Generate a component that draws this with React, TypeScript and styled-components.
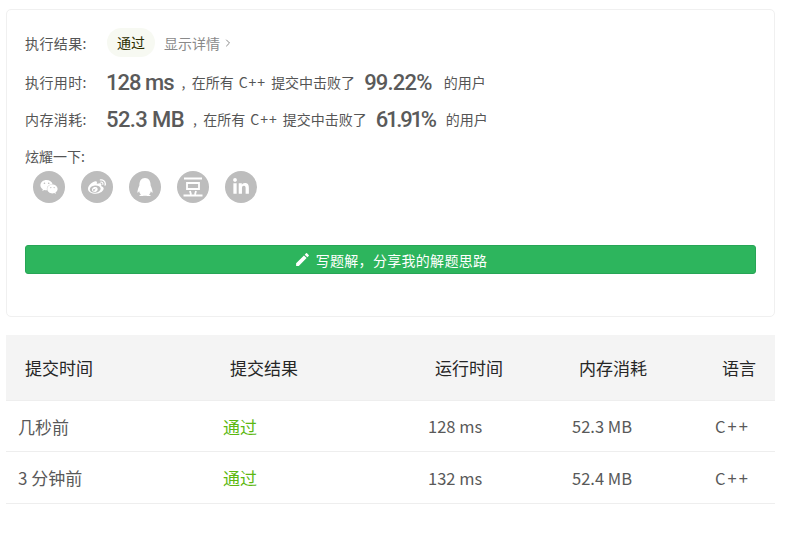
import React from "react";
import styled, { createGlobalStyle } from "styled-components";
import { FaLinkedinIn, FaQq, FaWeibo, FaWeixin } from "react-icons/fa";
import { MdEdit } from "react-icons/md";
import { ChevronRight } from "lucide-react";

const GlobalStyle = createGlobalStyle`
  html, body {
    margin: 0;
    background: #fff;
    font-family: "Noto Sans CJK SC", "Liberation Sans", sans-serif;
  }
`;

const Page = styled.div`
  width: 769px;
  padding: 9px 0 0 6px;
`;

const Card = styled.div`
  box-sizing: border-box;
  height: 308px;
  padding: 21px 18px 0;
  border: 1px solid #f0f0f0;
  border-radius: 5px;
`;

const Row = styled.div<{ $height: number; $top?: number }>`
  display: flex;
  align-items: center;
  height: ${(p) => p.$height}px;
  margin-top: ${(p) => p.$top ?? 0}px;
  font-size: 14px;
  color: #555;
  white-space: pre;
`;

const Label = styled.span`
  width: 81px;
  flex: none;
  letter-spacing: 0.4px;
`;

const Badge = styled.span`
  height: 29px;
  margin-left: 1px;
  padding: 0 10px;
  line-height: 29px;
  border-radius: 15px;
  background: #f7f9f2;
  color: #2d2d00;
`;

const DetailLink = styled.span`
  display: flex;
  align-items: center;
  gap: 2px;
  margin-left: 9px;
  color: #8a8a8a;
`;

const Big = styled.span<{ $before?: number; $after: number; $spacing: number }>`
  margin-left: ${(p) => p.$before ?? 0}px;
  margin-right: ${(p) => p.$after}px;
  padding-top: 2px;
  font-family: Roboto, sans-serif;
  font-size: 22px;
  font-weight: 500;
  letter-spacing: ${(p) => p.$spacing}px;
  color: #5a5a5a;
`;

const Lang = styled.span`
  margin: 0 5px;
  letter-spacing: 1px;
`;

const ShareLabel = styled.div`
  margin-top: 10px;
  font-size: 14px;
  line-height: 18px;
  color: #555;
`;

const ShareList = styled.div`
  display: flex;
  gap: 16px;
  margin: 6px 0 0 8px;
`;

const ShareIcon = styled.span`
  display: flex;
  align-items: center;
  justify-content: center;
  width: 32px;
  height: 32px;
  border-radius: 50%;
  background: #bdbdbd;
  color: #fff;
  font-size: 18px;
`;

const WriteButton = styled.button`
  display: flex;
  align-items: center;
  justify-content: center;
  gap: 5px;
  width: 100%;
  height: 29px;
  margin-top: 42px;
  padding: 0;
  border: 1px solid #27a556;
  border-radius: 3px;
  background: #2db55d;
  color: #fff;
  font: inherit;
  font-size: 14px;
  letter-spacing: 0.3px;
`;

const Table = styled.table`
  width: 769px;
  margin-top: 18px;
  border-collapse: collapse;
  table-layout: fixed;
`;

const Col = styled.col<{ $width: number }>`
  width: ${(p) => p.$width}px;
`;

const Head = styled.th`
  height: 65px;
  padding: 0 19px;
  background: #f4f4f4;
  border-bottom: 1px solid #eee;
  font-size: 17px;
  font-weight: 400;
  text-align: left;
  color: #262626;
`;

const BodyRow = styled.tr`
  &:last-child td {
    height: 51px;
  }
`;

const Cell = styled.td<{ $size?: number; $spacing?: number }>`
  height: 50px;
  padding: 0 12px;
  border-bottom: 1px solid #eee;
  font-size: ${(p) => p.$size ?? 16.5}px;
  letter-spacing: ${(p) => p.$spacing ?? 0}px;
  color: #595959;
`;

const Passed = styled.span`
  color: #5cb811;
`;

const DoubanIcon = () => (
  <svg width="20" height="20" viewBox="0 0 20 20" fill="none" stroke="#fff" strokeWidth="1.8">
    <path d="M1 1.5h18M4 6h12v6H4zM7 14l1 3.5M13 14l-1 3.5M0.5 18.5h19" />
  </svg>
);

type StatProps = {
  label: string;
  value: string;
  valueGap: number;
  valueSpacing: number;
  percent: string;
  percentSpacing: number;
  percentGap: number;
  top?: number;
};

const Stat: React.FC<StatProps> = ({ label, value, valueGap, valueSpacing, percent, percentSpacing, percentGap, top }) => (
  <Row $height={37} $top={top}>
    <Label>{label}</Label>
    <Big $after={valueGap} $spacing={valueSpacing}>{value}</Big>
    {",  在所有"}
    <Lang>C++</Lang>
    {"提交中击败了"}
    <Big $before={9} $after={percentGap} $spacing={percentSpacing}>{percent}</Big>
    的用户
  </Row>
);

const rows = [
  { time: "几秒前", runtime: "128 ms", memory: "52.3 MB" },
  { time: "3 分钟前", runtime: "132 ms", memory: "52.4 MB" },
];

const App: React.FC = () => {
  return (
    <Page>
      <GlobalStyle />
      <Card>
        <Row $height={23}>
          <Label>执行结果:</Label>
          <Badge>通过</Badge>
          <DetailLink>
            显示详情
            <ChevronRight size={12} />
          </DetailLink>
        </Row>
        <Stat top={9} label="执行用时:" value="128 ms" valueGap={8} valueSpacing={-1} percent="99.22%" percentSpacing={-0.8} percentGap={12} />
        <Stat label="内存消耗:" value="52.3 MB" valueGap={9} valueSpacing={-0.6} percent="61.91%" percentSpacing={-2.2} percentGap={11} />
        <ShareLabel>炫耀一下:</ShareLabel>
        <ShareList>
          <ShareIcon><FaWeixin /></ShareIcon>
          <ShareIcon><FaWeibo /></ShareIcon>
          <ShareIcon><FaQq /></ShareIcon>
          <ShareIcon><DoubanIcon /></ShareIcon>
          <ShareIcon><FaLinkedinIn /></ShareIcon>
        </ShareList>
        <WriteButton type="button">
          <MdEdit size={17} />
          {"写题解\uFF0C分享我的解题思路"}
        </WriteButton>
      </Card>
      <Table>
        <colgroup>
          <Col $width={205} />
          <Col $width={205} />
          <Col $width={144} />
          <Col $width={143} />
          <Col $width={72} />
        </colgroup>
        <thead>
          <tr>
            <Head>提交时间</Head>
            <Head>提交结果</Head>
            <Head>运行时间</Head>
            <Head>内存消耗</Head>
            <Head>语言</Head>
          </tr>
        </thead>
        <tbody>
          {rows.map((row) => (
            <BodyRow key={row.time}>
              <Cell $size={17}>{row.time}</Cell>
              <Cell $size={17}><Passed>通过</Passed></Cell>
              <Cell>{row.runtime}</Cell>
              <Cell>{row.memory}</Cell>
              <Cell $spacing={2}>C++</Cell>
            </BodyRow>
          ))}
        </tbody>
      </Table>
    </Page>
  );
};

export default App;
